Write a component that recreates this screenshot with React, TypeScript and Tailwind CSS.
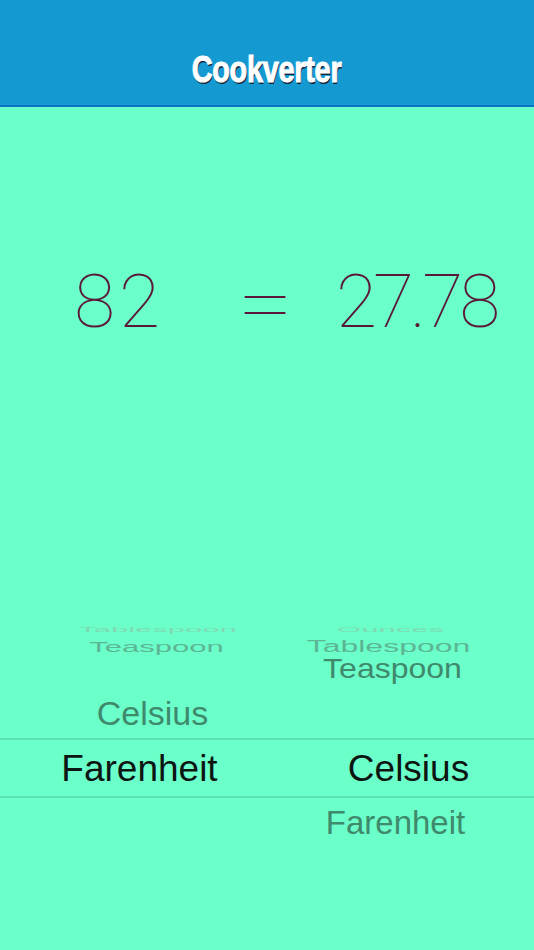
import React from 'react';

const sans = "font-['Liberation_Sans','Helvetica_Neue',Arial,sans-serif]";

type Cell = { text?: string; cls?: string };

type Row = {
  h: string;
  squash: string;
  left: Cell;
  right: Cell;
};

const rows: Row[] = [
  {
    h: 'h-[16px]',
    squash: 'scale-y-[0.22]',
    left: { text: 'Tablespoon', cls: 'translate-x-[24px] text-[#7fd9b4] text-[31px]' },
    right: { text: 'Ounces', cls: '-translate-x-[10px] text-[#7fd9b4] text-[31px]' },
  },
  {
    h: 'h-[18px]',
    squash: 'scale-y-[0.5]',
    left: { text: 'Teaspoon', cls: 'translate-x-[23px] text-[#5cb694] text-[31px]' },
    right: { text: 'Tablespoon', cls: '-translate-x-[12px] text-[#5cb694] text-[32px]' },
  },
  {
    h: 'h-[42px]',
    squash: 'scale-y-[0.85]',
    left: {},
    right: { text: 'Teaspoon', cls: '-translate-x-[8px] text-[#3f8a6c] text-[32px]' },
  },
  {
    h: 'h-[48px]',
    squash: 'scale-y-[0.95]',
    left: { text: 'Celsius', cls: 'translate-x-[19px] text-[#3f8a6c] text-[34px]' },
    right: {},
  },
];

function PickerText({ cell, squash }: { cell: Cell; squash: string }) {
  if (!cell.text) return <div />;
  return (
    <div className="flex items-center justify-center overflow-visible">
      <span className={`block leading-none whitespace-nowrap ${squash} ${cell.cls ?? ''}`}>{cell.text}</span>
    </div>
  );
}

export default function App() {
  return (
    <div className={`w-[534px] h-[950px] bg-[#6bffca] overflow-hidden ${sans}`}>
      {/* Title bar */}
      <header className="h-[107px] bg-[#1499d1] border-b-2 border-[#0c70c6] flex justify-center pt-[52px]">
        <h1 className="block scale-x-[0.8] text-white text-[36px] font-bold leading-none tracking-[-0.3px] [-webkit-text-stroke:1px_white] [text-shadow:1px_2px_0_#17253a]">
          Cookverter
        </h1>
      </header>

      {/* Result */}
      <div className="mt-[154px] flex items-center text-[#5a1737] font-['Roboto',sans-serif] font-thin text-[75px] leading-none">
        <span className="ml-[74px] w-[100px] tracking-[4px]">82</span>
        <span className="ml-[70px] w-[52px] text-[80px] translate-y-[3px] scale-x-[1.25]">=</span>
        <span className="ml-[40px] tracking-[-4px]">27.78</span>
      </div>

      {/* Unit pickers */}
      <div className="mt-[273px]">
        {rows.map((r, i) => (
          <div key={i} className={`grid grid-cols-2 ${r.h}`}>
            <PickerText cell={r.left} squash={r.squash} />
            <PickerText cell={r.right} squash={r.squash} />
          </div>
        ))}
        <div className="grid grid-cols-2 h-[60px] border-y-2 border-[#5de3b3] text-[#0d1512] text-[37px]">
          <div className="flex items-center justify-center">
            <span className="translate-x-[6px] leading-none">Farenheit</span>
          </div>
          <div className="flex items-center justify-center">
            <span className="translate-x-[8px] leading-none">Celsius</span>
          </div>
        </div>
        <div className="grid grid-cols-2 h-[48px] text-[#3f8a6c] text-[33px]">
          <div />
          <div className="flex items-center justify-center">
            <span className="-translate-x-[5px] leading-none">Farenheit</span>
          </div>
        </div>
      </div>
    </div>
  );
}
